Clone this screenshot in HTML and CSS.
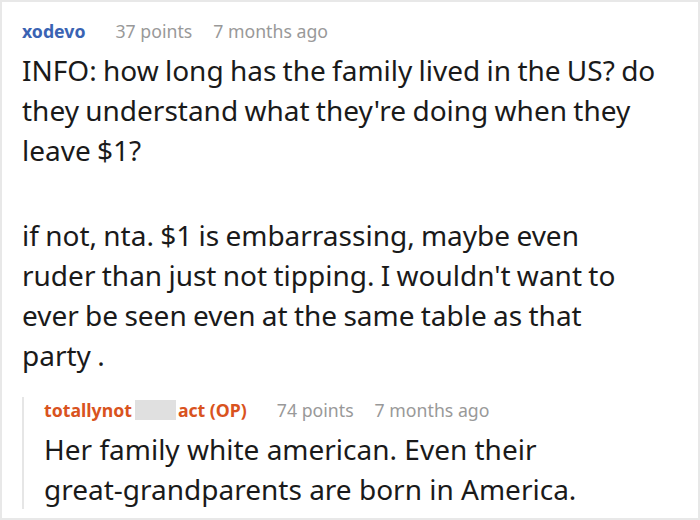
FILE: index.html
```html
<!DOCTYPE html>
<html>
<head>
<meta charset="utf-8">
<link rel="stylesheet" href="styles.css">
</head>
<body>
<div class="frame">
  <div class="comment">
    <div class="meta">
      <span class="author">xodevo</span>
      <span class="info">37 points</span>
      <span class="info">7 months ago</span>
    </div>
    <div class="body first">
      <p>INFO: how long has the family lived in the US? do<br>they understand what they're doing when they<br>leave $1?</p>
      <p>if not, nta. $1 is embarrassing, maybe even<br>ruder than just not tipping. I wouldn't want to<br>ever be seen even at the same table as that<br>party .</p>
    </div>
    <div class="reply">
      <div class="meta">
        <span class="author op">totallynot<span class="redact"></span>act (OP)</span>
        <span class="info">74 points</span>
        <span class="info">7 months ago</span>
      </div>
      <div class="body second">
        <p>Her family white american. Even their great-grandparents are born in America.</p>
      </div>
    </div>
  </div>
</div>
</body>
</html>
```

FILE: styles.css
```css
html, body {
  margin: 0;
  padding: 0;
  background: #ffffff;
}
.frame {
  width: 700px;
  height: 520px;
  box-sizing: border-box;
  border: 2px solid #e8e8e8;
  overflow: hidden;
  font-family: "Noto Sans", sans-serif;
  color: #1a1a1a;
}
.comment {
  padding: 16px 0 0 20px;
}
.meta {
  font-size: 17.7px;
  line-height: 26px;
  display: flex;
  align-items: center;
  margin-bottom: 6px;
}
.author {
  font-weight: bold;
  color: #3a63b3;
  margin-right: 30px;
  display: flex;
  align-items: center;
}
.author.op {
  color: #d9531e;
}
.redact {
  display: inline-block;
  width: 41px;
  height: 20px;
  background: #e0e0e0;
  margin: 0 2px 0 3px;
}
.info {
  color: #999999;
  margin-right: 21px;
}
.body {
  font-size: 28px;
  line-height: 40px;
}
.body p {
  margin: 0 0 45px 0;
}
.body p:last-child {
  margin-bottom: 0;
}
.first {
  white-space: nowrap;
  word-spacing: -1px;
}
.second {
  width: 565px;
}
.reply {
  margin-top: 22px;
  border-left: 2px solid #e6e6e6;
  padding-left: 20px;
}
```
